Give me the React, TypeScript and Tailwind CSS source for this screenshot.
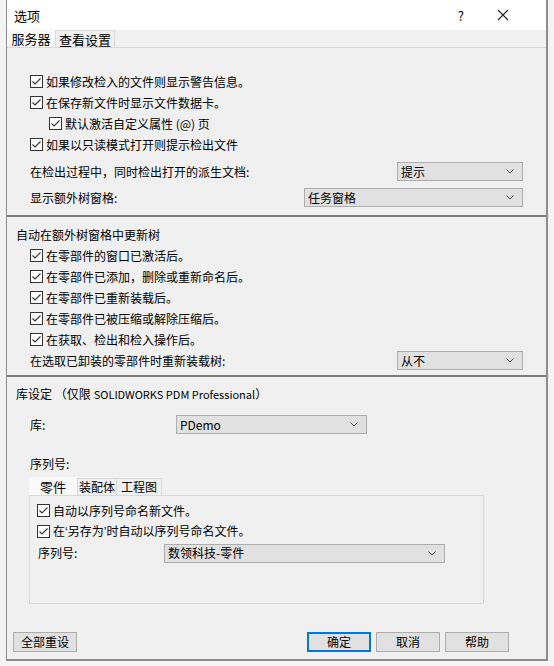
import React from "react";

const Check = () => (
  <svg width="13" height="13" viewBox="0 0 13 13" className="shrink-0">
    <rect x="0.5" y="0.5" width="12" height="12" fill="#ffffff" stroke="#333333" />
    <path d="M2.5 6.5 L5 9 L10.5 3.5" fill="none" stroke="#333333" strokeWidth="1.1" />
  </svg>
);

const CheckRow = ({ label, indent = 0 }: { label: React.ReactNode; indent?: number }) => (
  <div className="flex h-[21px] items-center gap-[3px]" style={{ paddingLeft: indent }}>
    <Check />
    <span>{label}</span>
  </div>
);

const Combo = ({ value, className }: { value: string; className: string }) => (
  <div
    className={
      "flex h-[19px] items-center justify-between border border-[#adadad] bg-[#e1e1e1] pl-[3px] pr-[8px] " +
      className
    }
  >
    <span>{value}</span>
    <svg width="8" height="5" viewBox="0 0 8 5">
      <path d="M0.5 0.5 L4 4 L7.5 0.5" fill="none" stroke="#555555" strokeWidth="1" />
    </svg>
  </div>
);

const Button = ({ label, primary }: { label: string; primary?: boolean }) => (
  <div
    className={
      "flex h-[20px] w-[64px] items-center justify-center bg-[#e1e1e1] " +
      (primary ? "border-2 border-[#0078d7]" : "border border-[#adadad]")
    }
  >
    {label}
  </div>
);

const Quote = ({ c }: { c: string }) => (
  <span style={{ fontFamily: '"Liberation Sans", sans-serif' }}>{c}</span>
);

export default function App() {
  return (
    <div
      className="h-[666px] w-[554px] bg-[#f4f4f4] pl-[6px] text-[12px] leading-none text-black"
      style={{ fontFamily: '"Noto Sans CJK SC", "Noto Sans", sans-serif' }}
    >
      <div className="flex h-[661px] w-[542px] flex-col border-b-2 border-l border-r-2 border-[#8c8c8c] bg-[#f0f0f0]">
        {/* title bar */}
        <div className="flex h-[30px] items-center bg-white pl-[7px]">
          <span className="text-[13px]">选项</span>
          <span className="ml-auto mr-[33px] text-[13px]">?</span>
          <svg width="12" height="12" viewBox="0 0 12 12" className="mr-[37px]">
            <path d="M1 1 L11 11 M11 1 L1 11" stroke="#222222" strokeWidth="1.1" />
          </svg>
        </div>

        {/* tabs */}
        <div className="flex h-[18px] items-end border-b border-[#d9d9d9]">
          <div className="flex h-[18px] w-[48px] items-center justify-center bg-[#f9f9f9] text-[13px]">服务器</div>
          <div className="flex h-[17px] items-center justify-center whitespace-nowrap border border-b-0 border-[#d9d9d9] bg-[#f0f0f0] px-[3px] text-[13px]">
            查看设置
          </div>
        </div>

        {/* section 1 */}
        <div className="flex h-[167px] flex-col px-[23px] pt-[23px]">
          <CheckRow label="如果修改检入的文件则显示警告信息。" />
          <CheckRow label="在保存新文件时显示文件数据卡。" />
          <CheckRow label="默认激活自定义属性 (@) 页" indent={19} />
          <CheckRow label="如果以只读模式打开则提示检出文件" />
          <div className="mt-[6px] flex h-[21px] items-center">
            <span>在检出过程中，同时检出打开的派生文档:</span>
            <Combo value="提示" className="ml-auto w-[126px]" />
          </div>
          <div className="mt-[5px] flex h-[21px] items-center">
            <span>显示额外树窗格:</span>
            <Combo value="任务窗格" className="ml-auto w-[219px]" />
          </div>
        </div>
        <div className="h-[2px] bg-[#7a7a7a]" />

        {/* section 2 */}
        <div className="flex h-[158px] flex-col pl-[9px] pr-[23px] pt-[7px]">
          <div className="flex h-[21px] items-center">自动在额外树窗格中更新树</div>
          <div className="flex flex-col pl-[14px]">
            <CheckRow label="在零部件的窗口已激活后。" />
            <CheckRow label="在零部件已添加，删除或重新命名后。" />
            <CheckRow label="在零部件已重新装载后。" />
            <CheckRow label="在零部件已被压缩或解除压缩后。" />
            <CheckRow label="在获取、检出和检入操作后。" />
            <div className="flex h-[21px] items-center">
              <span>在选取已卸装的零部件时重新装载树:</span>
              <Combo value="从不" className="ml-auto w-[126px]" />
            </div>
          </div>
        </div>
        <div className="h-[2px] bg-[#7a7a7a]" />

        {/* section 3 */}
        <div className="flex flex-1 flex-col pl-[9px] pr-[37px] pt-[8px]">
          <div className="flex h-[18px] items-center">
            库设定 （仅限 <span className="ml-[3px] text-[11px]">SOLIDWORKS PDM Professional</span>）
          </div>
          <div className="mt-[12px] flex h-[19px] items-center pl-[14px]">
            <span className="w-[146px]">库:</span>
            <Combo value="PDemo" className="w-[191px]" />
          </div>
          <div className="mt-[22px] flex h-[16px] items-center pl-[14px]">序列号:</div>
          <div className="ml-[13px] mt-[5px] flex flex-col">
            <div className="flex h-[18px] items-end">
              <div className="flex h-[18px] w-[48px] items-center justify-center bg-[#f9f9f9] text-[13px]">零件</div>
              <div className="flex h-[17px] items-center justify-center whitespace-nowrap border border-b-0 border-[#d9d9d9] px-[1px] text-[12px]">
                装配体
              </div>
              <div className="flex h-[17px] items-center justify-center whitespace-nowrap border border-b-0 border-l-0 border-[#d9d9d9] px-[4px] text-[12px]">
                工程图
              </div>
            </div>
            <div className="flex h-[109px] w-[455px] flex-col border border-[#d9d9d9] bg-[#f0f0f0] px-[7px] pt-[4px]">
              <CheckRow label="自动以序列号命名新文件。" />
              <CheckRow
                label={
                  <>
                    在<Quote c="‘" />另存为<Quote c="’" />时自动以序列号命名文件。
                  </>
                }
              />
              <div className="mt-[1px] flex h-[20px] items-center">
                <span className="w-[127px] pl-[1px]">序列号:</span>
                <Combo value="数领科技-零件" className="w-[281px]" />
              </div>
            </div>
          </div>
          <div className="-ml-[3px] mb-[7px] mt-auto flex items-center">
            <Button label="全部重设" />
            <div className="ml-auto flex gap-[5px]">
              <Button label="确定" primary />
              <Button label="取消" />
              <Button label="帮助" />
            </div>
          </div>
        </div>
      </div>
    </div>
  );
}
